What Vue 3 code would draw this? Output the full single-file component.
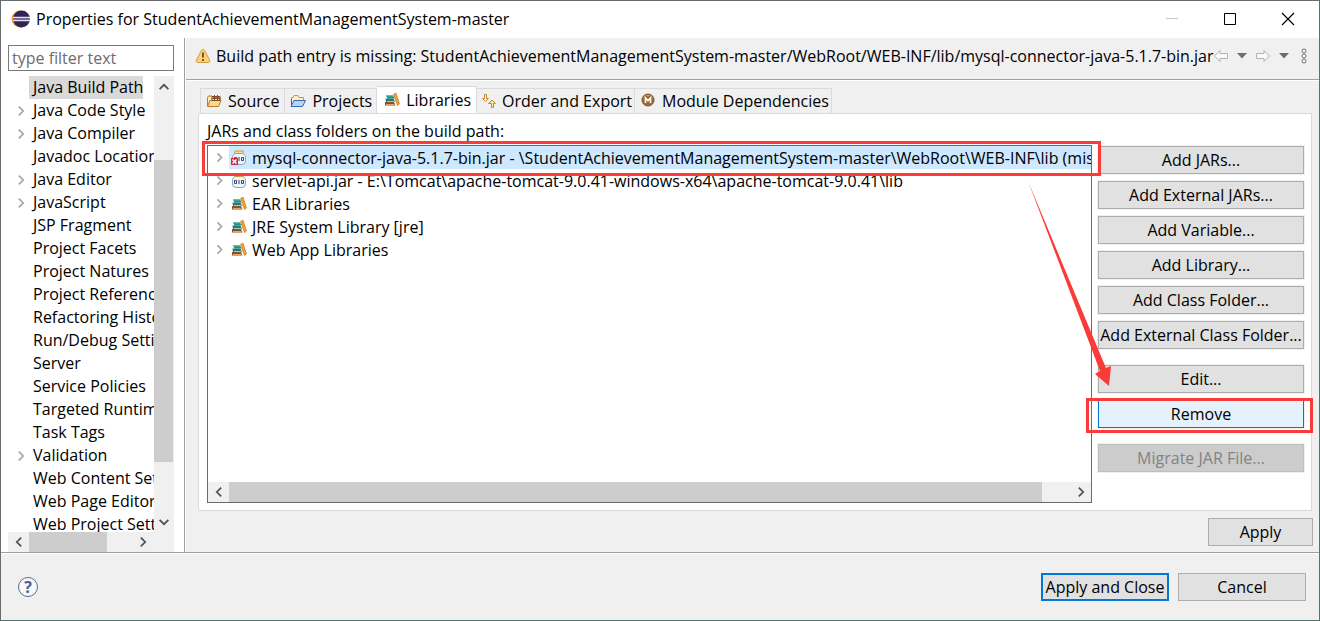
<script setup>
const categories = [
  { name: 'Java Build Path', selected: true },
  { name: 'Java Code Style', children: true },
  { name: 'Java Compiler', children: true },
  { name: 'Javadoc Location' },
  { name: 'Java Editor', children: true },
  { name: 'JavaScript', children: true },
  { name: 'JSP Fragment' },
  { name: 'Project Facets' },
  { name: 'Project Natures' },
  { name: 'Project References' },
  { name: 'Refactoring History' },
  { name: 'Run/Debug Settings' },
  { name: 'Server' },
  { name: 'Service Policies' },
  { name: 'Targeted Runtimes' },
  { name: 'Task Tags' },
  { name: 'Validation', children: true },
  { name: 'Web Content Settings' },
  { name: 'Web Page Editor' },
  { name: 'Web Project Settings' }
]
const tabs = [
  { name: 'Source', icon: 'source' },
  { name: 'Projects', icon: 'projects' },
  { name: 'Libraries', icon: 'books', active: true },
  { name: 'Order and Export', icon: 'order' },
  { name: 'Module Dependencies', icon: 'module' }
]
const entries = [
  { name: 'mysql-connector-java-5.1.7-bin.jar - \\StudentAchievementManagementSystem-master\\WebRoot\\WEB-INF\\lib (missing)', icon: 'jar', missing: true },
  { name: 'servlet-api.jar - E:\\Tomcat\\apache-tomcat-9.0.41-windows-x64\\apache-tomcat-9.0.41\\lib', icon: 'jar' },
  { name: 'EAR Libraries', icon: 'books' },
  { name: 'JRE System Library [jre]', icon: 'books' },
  { name: 'Web App Libraries', icon: 'books' }
]
const actionGroups = [
  ['Add JARs...', 'Add External JARs...', 'Add Variable...', 'Add Library...', 'Add Class Folder...', 'Add External Class Folder...'],
  ['Edit...', 'Remove'],
  ['Migrate JAR File...']
]
</script>

<template>
  <div class="window">
    <svg class="defs" aria-hidden="true">
      <symbol id="source" viewBox="0 0 16 16">
        <path d="M1.500 13V4.500L2.500 3H6l1 1.500h7V7" fill="#fbe9bd" stroke="#b97a2c" />
        <path d="M1.500 13.500 4 7.500h11L12.500 13.500z" fill="#fbd98d" stroke="#b97a2c" />
        <path d="M6 3.500h8v4H6zM6 5.500h8M8.500 2v6M11.500 2v6" fill="none" stroke="#7c4a2b" />
      </symbol>
      <symbol id="projects" viewBox="0 0 16 16">
        <path d="M1.500 11V4.500H3L4 2.500h4l1 2h4.500V7" fill="#fdf0c8" stroke="#c59a4d" />
        <path d="M1 13.500 4 7.500h11.500L12.500 13.500z" fill="#b9d6f8" stroke="#3a67b1" />
        <path d="M1.500 13V6" stroke="#3a67b1" />
      </symbol>
      <symbol id="books" viewBox="0 0 16 16">
        <path d="M2 3.500h7l1.500 3h-7z" fill="#2b8f7c" /><path d="M2 4h7" stroke="#4fae95" />
        <path d="M1.500 6.500h8l1.500 3.500H2z" fill="#1b7c80" /><path d="M3 9.500h7" stroke="#a9cfc0" />
        <path d="M1 10h9l1.500 3.500H1z" fill="#8f4f2b" /><path d="M2 12.500h8.500" stroke="#e2a663" />
        <path d="m9.500 2.500 2.500-1.500L15.500 12 13.500 13.500z" fill="#f0a32e" stroke="#b96b1c" stroke-width=".6" />
      </symbol>
      <symbol id="order" viewBox="0 0 16 16">
        <path d="M3.500 1.500h2v4h2l-3 3-3-3h2z" fill="#fff3c9" stroke="#bd8b2c" />
        <path d="M10.500 14.500h2v-4h2l-3.500-3.500-3.500 3.500h3z" fill="#ffe5a0" stroke="#bd8b2c" />
      </symbol>
      <symbol id="module" viewBox="0 0 16 16">
        <circle cx="8" cy="7" r="6" fill="#9b6a38" stroke="#7d5126" />
        <path d="M3.500 5a5 5 0 0 1 9 0" fill="none" stroke="#c39a6b" />
        <path d="M5.500 10V5L8 7.500 10.500 5v5" fill="none" stroke="#fff" stroke-width="1.600" />
      </symbol>
      <symbol id="jar" viewBox="0 0 16 16">
        <path d="M4 3.500C1.500 5 1.500 6 1.500 8v3q0 3.500 3.500 3.500h6q3.500 0 3.500-3.500V8c0-2 0-3-2.500-4.500z" fill="#edf4fc" stroke="#8ba6c8" />
        <rect x="3.500" y="1" width="9" height="2.500" rx="1" fill="#f6dc93" stroke="#c79b3c" />
        <path d="M3.500 7.500h2v3h-2zM8 7v4M10.500 7.500h2v3h-2z" fill="none" stroke="#34485f" />
      </symbol>
      <symbol id="chevron" viewBox="0 0 16 16">
        <path d="m5.500 3 5 5-5 5" fill="none" stroke="currentColor" stroke-width="2" />
      </symbol>
    </svg>

    <header class="titlebar">
      <svg class="logo" viewBox="0 0 20 20" aria-hidden="true">
        <circle cx="9" cy="10" r="8.500" fill="#f39a3b" />
        <circle cx="10.500" cy="10" r="8.500" fill="#2f2458" />
        <path d="M2 8.500h17M2 11.500h17" stroke="#e4e2f2" stroke-width="1.500" />
        <path d="M2 10h17" stroke="#8d84ad" stroke-width="1" />
      </svg>
      <h1>Properties for StudentAchievementManagementSystem-master</h1>
      <button class="control" aria-label="Minimize" disabled><svg viewBox="0 0 14 14"><path d="M1 6.500h12" stroke="#c8c8c8" /></svg></button>
      <button class="control" aria-label="Maximize"><svg viewBox="0 0 14 14"><path d="M1.500 1.500h11v11h-11z" fill="none" stroke="#000" /></svg></button>
      <button class="control" aria-label="Close"><svg viewBox="0 0 14 14"><path d="m1 1 12 12M13 1 1 13" stroke="#000" stroke-width="1.200" /></svg></button>
    </header>

    <div class="body">
      <nav class="sidebar" aria-label="Property pages">
        <input class="filter" type="text" placeholder="type filter text" aria-label="Filter text">
        <div class="scroller">
          <ul class="categories">
            <li v-for="c in categories" :key="c.name">
              <button v-if="c.children" class="twisty" :aria-label="'Expand ' + c.name"><svg><use href="#chevron" /></svg></button>
              <span v-else class="twisty"></span>
              <a href="#" :class="{ selected: c.selected }">{{ c.name }}</a>
            </li>
          </ul>
          <div class="vbar">
            <button class="up" aria-label="Scroll up"><svg><use href="#chevron" /></svg></button>
            <div class="vtrack"><div class="vthumb"></div></div>
            <button class="down" aria-label="Scroll down"><svg><use href="#chevron" /></svg></button>
          </div>
        </div>
        <div class="hbar side">
          <button class="left" aria-label="Scroll left"><svg><use href="#chevron" /></svg></button>
          <div class="htrack"><div class="hthumb"></div></div>
          <button aria-label="Scroll right"><svg><use href="#chevron" /></svg></button>
        </div>
      </nav>

      <main class="page">
        <div class="message">
          <svg class="warn" viewBox="0 0 16 16" aria-hidden="true">
            <path d="M8 1.500c1 0 1.500.7 2 1.600l4.500 9c.6 1.300 0 2.400-1.300 2.400H2.800c-1.300 0-1.900-1.100-1.300-2.400l4.500-9c.5-.9 1-1.600 2-1.600z" fill="#fbd27c" stroke="#d5993e" />
            <path d="M8 4.500v5M8 11v2" stroke="#6c4a1d" stroke-width="1.800" />
          </svg>
          <p>Build path entry is missing: StudentAchievementManagementSystem-master/WebRoot/WEB-INF/lib/mysql-connector-java-5.1.7-bin.jar</p>
          <div class="history">
            <button aria-label="Back" disabled><svg class="arrow" viewBox="0 0 16 16"><path d="M1.500 8 7 2.500v3h7.500v5H7v3z" fill="#f8f8f8" stroke="#b4b4b4" /></svg></button>
            <button aria-label="Back history"><svg class="caret" viewBox="0 0 10 6"><path d="M0 0h10L5 5.500z" fill="#6d6d6d" /></svg></button>
            <button aria-label="Forward" disabled><svg class="arrow" viewBox="0 0 16 16"><path d="M14.500 8 9 2.500v3H1.500v5H9v3z" fill="#f8f8f8" stroke="#b4b4b4" /></svg></button>
            <button aria-label="Forward history"><svg class="caret" viewBox="0 0 10 6"><path d="M0 0h10L5 5.500z" fill="#6d6d6d" /></svg></button>
            <button aria-label="View menu"><svg class="dots" viewBox="0 0 6 16"><g fill="#fff" stroke="#6d6d6d"><circle cx="3" cy="3" r="2" /><circle cx="3" cy="8" r="2" /><circle cx="3" cy="13" r="2" /></g></svg></button>
          </div>
        </div>

        <div class="content">
          <div class="tabs" role="tablist">
            <button v-for="t in tabs" :key="t.name" class="tab" :class="[t.icon, { active: t.active }]" role="tab" :aria-selected="!!t.active">
              <svg aria-hidden="true"><use :href="'#' + t.icon" /></svg>{{ t.name }}
            </button>
          </div>
          <section class="panel">
            <h2>JARs and class folders on the build path:</h2>
            <div class="columns">
              <div class="tree">
                <ul class="entries">
                  <li v-for="e in entries" :key="e.name" :class="{ highlighted: e.missing }">
                    <button class="twisty" :aria-label="'Expand ' + e.name"><svg><use href="#chevron" /></svg></button>
                    <div class="entry">
                      <svg viewBox="0 0 16 16" aria-hidden="true">
                        <use :href="'#' + e.icon" />
                        <g v-if="e.missing"><path d="M0 8h7v7H0z" fill="#d8283c" /><path d="m1.500 9.500 4 4m0-4-4 4" stroke="#fff" stroke-width="1.500" /></g>
                      </svg>
                      <span>{{ e.name }}</span>
                    </div>
                  </li>
                </ul>
                <div class="hbar main">
                  <button class="left" aria-label="Scroll left"><svg><use href="#chevron" /></svg></button>
                  <div class="htrack"><div class="hthumb"></div></div>
                  <button aria-label="Scroll right"><svg><use href="#chevron" /></svg></button>
                </div>
                <div class="mark row-mark"></div>
              </div>
              <div class="actions">
                <div v-for="(group, i) in actionGroups" :key="i" class="group">
                  <div v-for="label in group" :key="label" class="slot">
                    <button class="btn" :class="{ hot: label === 'Remove' }" :disabled="label.startsWith('Migrate')">{{ label }}</button>
                    <div v-if="label === 'Remove'" class="mark button-mark"></div>
                  </div>
                </div>
                <svg class="pointer" viewBox="0 0 84 206" aria-hidden="true"><path d="M0 0 78 187l5-2-2 20-14-12 5-3z" fill="#fb3b38" /></svg>
              </div>
            </div>
          </section>
          <div class="apply-row"><button class="btn apply">Apply</button></div>
        </div>
      </main>
    </div>

    <footer class="footer">
      <button class="help" aria-label="Help">?</button>
      <button class="btn primary">Apply and Close</button>
      <button class="btn">Cancel</button>
    </footer>
  </div>
</template>

<style>
body { margin: 0; }
</style>

<style scoped>
* { box-sizing: border-box; }
button, input { font: inherit; color: inherit; margin: 0; padding: 0; border: 0; background: none; border-radius: 0; }
h1, h2, p, ul { margin: 0; padding: 0; font-size: inherit; font-weight: 400; list-style: none; }
svg { display: block; flex: none; }
.defs { position: absolute; width: 0; height: 0; }
.window {
  display: flex; flex-direction: column; height: 100vh; overflow: hidden;
  font: 16px/22px "Open Sans", "Noto Sans", sans-serif; color: #000; background: #f0f0f0;
  border: 1px solid #6b6b6b; border-right-color: #567370; border-bottom-color: #567370;
}
.titlebar { flex: none; display: flex; align-items: center; height: 37px; background: #fff; padding: 0 2px 1px 10px; }
.titlebar h1 { flex: 1; margin-left: 5px; white-space: nowrap; }
.logo { width: 20px; height: 20px; }
.control { width: 58px; height: 36px; display: grid; place-items: center; }
.control svg { width: 14px; height: 14px; }
.body { flex: 1; min-height: 0; display: flex; }
.sidebar { flex: none; width: 184px; padding: 7px 10px 0 7px; display: flex; flex-direction: column; background: #fff; border-right: 1px solid #a0a0a0; }
.filter { flex: none; width: 100%; height: 26px; border: 1px solid #7a7a7a; padding: 0 3px; background: #fff; }
.filter::placeholder { color: #6d6d6d; opacity: 1; }
.scroller { flex: 1; min-height: 0; display: flex; margin-top: 5px; }
.categories { flex: 1; min-width: 0; overflow: hidden; }
.categories li { display: flex; height: 23px; white-space: nowrap; }
.categories a { color: inherit; text-decoration: none; line-height: 23px; padding: 0 4px; }
.categories .selected { background: #d9d9d9; padding-right: 0; }
.twisty { flex: none; width: 21px; height: 23px; padding-left: 6px; color: #a6a6a6; display: flex; align-items: center; }
.twisty svg { width: 14px; height: 14px; }
.vbar { width: 20px; display: flex; flex-direction: column; background: #f0f0f0; color: #505050; }
.vbar button { height: 21px; display: grid; place-items: center; }
.vbar svg, .hbar svg { width: 14px; height: 14px; }
.up svg { transform: rotate(-90deg); }
.down svg { transform: rotate(90deg); }
.left svg { transform: rotate(180deg); }
.vtrack { flex: 1; }
.vthumb { width: 19px; height: 73%; margin-top: 63px; background: #cdcdcd; }
.hbar { flex: none; display: flex; height: 20px; background: #f0f0f0; color: #505050; }
.hbar button { flex: none; width: 21px; display: grid; place-items: center; }
.htrack { flex: 1; display: flex; }
.hthumb { background: #cdcdcd; }
.side { padding-right: 21px; }
.side .hthumb { width: 76%; }
.main .hthumb { width: calc(100% - 28px); }
.page { flex: 1; min-width: 0; display: flex; flex-direction: column; border-left: 1px solid #fff; }
.message { flex: none; display: flex; align-items: center; height: 42px; padding: 0 12px 6px 9px; border-bottom: 1px solid #a0a0a0; box-shadow: 0 1px #fff; }
.message p { flex: 1; min-width: 0; margin-left: 5px; white-space: nowrap; }
.warn { width: 16px; height: 16px; }
.history { display: flex; align-items: center; gap: 8px; }
.arrow { width: 16px; height: 16px; }
.caret { width: 10px; height: 6px; }
.dots { width: 6px; height: 16px; margin-left: 4px; }
.content { flex: 1; min-height: 0; display: flex; flex-direction: column; padding: 6px 6px 6px 12px; }
.tabs { flex: none; display: flex; align-items: flex-end; height: 27px; padding-left: 2px; }
.tab { display: flex; align-items: center; height: 25px; padding: 0 4px 0 5px; border: solid #dadada; border-width: 1px 1px 0 0; white-space: nowrap; }
.tab svg { width: 16px; height: 16px; margin-right: 6px; }
.tab.source { border-left-width: 1px; padding-right: 5px; }
.tab.order { padding: 0 2px 0 4px; }
.tab.order svg { margin-right: 5px; }
.tab.module { padding-right: 2px; }
.tab.active { height: 28px; background: #fff; margin-bottom: -1px; padding: 0 5px 2px 7px; }
.panel { flex: 1; min-height: 0; display: flex; flex-direction: column; margin-right: 1px; border: 1px solid #dadada; background: #fff; padding: 6px 7px 7px 8px; }
.columns { flex: 1; min-height: 0; display: flex; gap: 6px; margin-top: 3px; }
.tree { flex: 1; min-width: 0; position: relative; display: flex; flex-direction: column; border: 1px solid #6b6b6b; }
.entries { flex: 1; min-height: 0; overflow: hidden; }
.entries li { display: flex; height: 23px; }
.entries .twisty { padding-left: 5px; }
.entries .twisty svg { width: 13px; height: 13px; }
.entry { flex: 1; min-width: 0; display: flex; align-items: center; overflow: hidden; white-space: nowrap; padding-left: 2px; }
.entry svg { width: 16px; height: 16px; margin-right: 5px; }
.highlighted .entry { background: #cde8ff; }
.actions { flex: none; width: 206px; position: relative; z-index: 1; padding-top: 1px; display: flex; flex-direction: column; gap: 16px; }
.group { display: flex; flex-direction: column; gap: 7px; }
.slot { position: relative; display: flex; }
.btn { flex: none; height: 28px; border: 1px solid #adadad; background: #e1e1e1; white-space: nowrap; }
.slot .btn { width: 100%; box-shadow: 0 0 0 1px #f0f0f0; }
.slot .hot { background: #e5f1fb; border-color: #0078d7; }
.slot .btn:disabled { background: #ccc; border-color: #bfbfbf; color: #838383; }
.mark { position: absolute; z-index: 2; border: 3px solid #fb3b38; pointer-events: none; }
.row-mark { left: -6px; right: -10px; top: -5px; height: 35px; }
.button-mark { left: -12px; right: -9px; top: -2px; height: 35px; }
.pointer { position: absolute; left: -70px; top: 36px; width: 84px; height: 206px; pointer-events: none; }
.apply-row { flex: none; display: flex; justify-content: flex-end; margin-top: 7px; }
.apply { width: 105px; }
.footer { flex: none; display: flex; align-items: center; gap: 9px; height: 68px; padding: 0 13px 0 17px; border-top: 1px solid #a0a0a0; box-shadow: inset 0 1px #fff; }
.footer .btn { width: 128px; }
.footer .primary { border: 2px solid #0078d7; }
.help { width: 20px; height: 20px; margin-right: auto; border: 1px solid #5b6b8c; border-radius: 50%; color: #4b5f88; background: #f6f8fc; font-weight: 700; line-height: 18px; text-align: center; }
</style>
